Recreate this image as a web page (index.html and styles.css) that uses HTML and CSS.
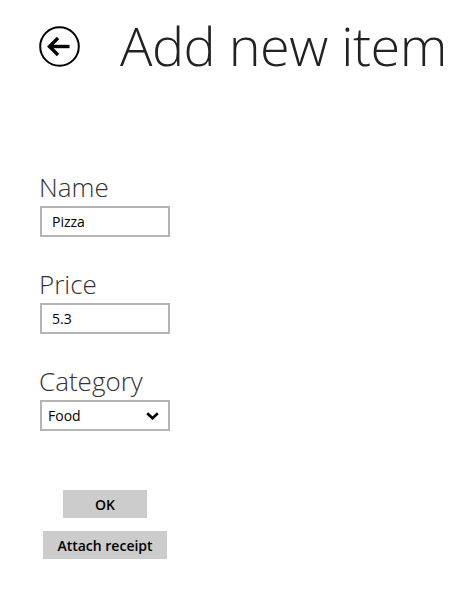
FILE: index.html
```html
<!DOCTYPE html>
<html>
<head>
<meta charset="utf-8">
<link rel="stylesheet" href="styles.css">
</head>
<body>
<div class="page">
  <header class="header">
    <button class="back" aria-label="Back">
      <svg width="41" height="41" viewBox="0 0 41 41">
        <circle cx="20.5" cy="20.5" r="19.3" fill="none" stroke="#000" stroke-width="2"/>
        <path d="M10.5 20.5 H30.5" stroke="#000" stroke-width="3.4" fill="none"/>
        <path d="M19 12 L10.5 20.5 L19 29" stroke="#000" stroke-width="3.4" fill="none" stroke-linejoin="miter"/>
      </svg>
    </button>
    <h1 class="title">Add new item</h1>
  </header>
  <main class="form">
    <div class="field">
      <label class="label">Name</label>
      <div class="input">Pizza</div>
    </div>
    <div class="field">
      <label class="label">Price</label>
      <div class="input">5.3</div>
    </div>
    <div class="field">
      <label class="label">Category</label>
      <div class="input select">
        <span>Food</span>
        <svg class="chev" width="13" height="8" viewBox="0 0 13 8">
          <path d="M1.2 1.2 L6.5 6.3 L11.8 1.2" stroke="#000" stroke-width="2.6" fill="none"/>
        </svg>
      </div>
    </div>
    <div class="actions">
      <button class="btn ok">OK</button>
      <button class="btn attach">Attach receipt</button>
    </div>
  </main>
</div>
</body>
</html>
```
FILE: styles.css
```css
html, body {
  margin: 0;
  padding: 0;
  background: #fff;
}
body {
  font-family: "Open Sans", "Noto Sans", sans-serif;
  color: #222;
}
.page {
  padding-left: 39px;
}
.header {
  display: flex;
  align-items: flex-start;
  padding-top: 26px;
}
.back {
  width: 41px;
  height: 41px;
  padding: 0;
  margin: 0;
  border: 0;
  background: none;
  display: block;
}
.back svg { display: block; }
.title {
  margin: -13px 0 0 40px;
  font-size: 54px;
  line-height: 64px;
  font-weight: 300;
  color: #222;
  letter-spacing: -0.5px;
  white-space: nowrap;
}
.form {
  display: flex;
  flex-direction: column;
  width: 131px;
  padding-left: 1px;
  padding-top: 94px;
}
.field {
  display: flex;
  flex-direction: column;
  margin-bottom: 31px;
}
.label {
  display: block;
  font-size: 26px;
  line-height: 32px;
  height: 32px;
  font-weight: 300;
  color: #333;
  margin-left: -1px;
  margin-bottom: 3px;
}
.input {
  box-sizing: border-box;
  height: 31px;
  width: 130px;
  border: 2px solid #b4b4b4;
  padding: 0 10px;
  font-size: 14px;
  line-height: 27px;
  color: #000;
  display: flex;
  align-items: center;
}
.select {
  justify-content: space-between;
  padding-left: 6px;
  padding-right: 9px;
}
.chev { display: block; margin-top: 1px; }
.actions {
  display: flex;
  flex-direction: column;
  align-items: center;
  gap: 13px;
  margin-top: 28px;
  margin-left: -1px;
}
.btn {
  border: 0;
  margin: 0;
  background: #cccccc;
  font-family: "Open Sans", "Noto Sans", sans-serif;
  font-size: 14px;
  font-weight: 600;
  color: #000;
  height: 28px;
  padding: 0;
}
.ok { width: 84px; }
.attach { width: 124px; }
```
